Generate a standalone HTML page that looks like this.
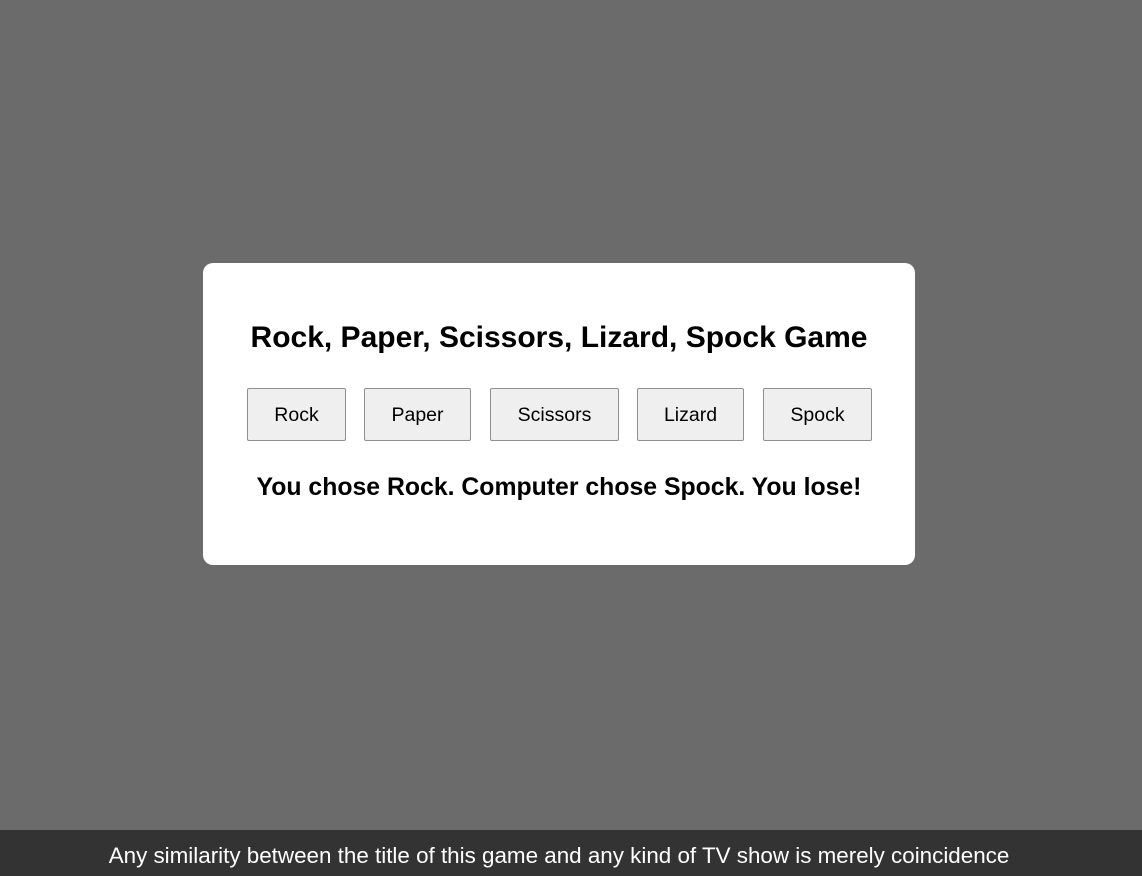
<!DOCTYPE html>
<html><head><style>
html,body{margin:0;padding:0;width:1142px;height:876px;background:#6b6b6b;font-family:"Liberation Sans",Arial,sans-serif;overflow:hidden;position:relative}
.card{position:absolute;left:203px;top:263px;width:712px;height:302px;background:#fff;border-radius:10px}
h1{position:absolute;left:0;width:712px;top:58px;margin:0;text-align:center;font-size:30px;font-weight:bold;color:#000;line-height:34px}
.b{position:absolute;top:125px;height:51px;background:#efefef;border:1px solid #8f8f8f;border-radius:2px;font-size:19.5px;line-height:53px;text-align:center;color:#000;box-sizing:content-box}
.r{position:absolute;left:0;width:712px;top:210px;text-align:center;font-size:24.8px;font-weight:bold;line-height:30px;color:#000}
.f{position:absolute;left:0;top:831px;width:1118px;height:46px;color:#fff;font-size:22.4px;line-height:50px;text-align:center;white-space:nowrap}
.fb{position:absolute;left:0;top:830px;width:1142px;height:46px;background:#333}
</style></head><body>
<div class="card">
<h1>Rock, Paper, Scissors, Lizard, Spock Game</h1>
<div class="b" style="left:44px;width:97px">Rock</div>
<div class="b" style="left:161px;width:105px">Paper</div>
<div class="b" style="left:287px;width:127px">Scissors</div>
<div class="b" style="left:434px;width:105px">Lizard</div>
<div class="b" style="left:560px;width:107px">Spock</div>
<div class="r">You chose Rock. Computer chose Spock. You lose!</div>
</div>
<div class="fb"></div>
<div class="f">Any similarity between the title of this game and any kind of TV show is merely coincidence</div>
</body></html>
